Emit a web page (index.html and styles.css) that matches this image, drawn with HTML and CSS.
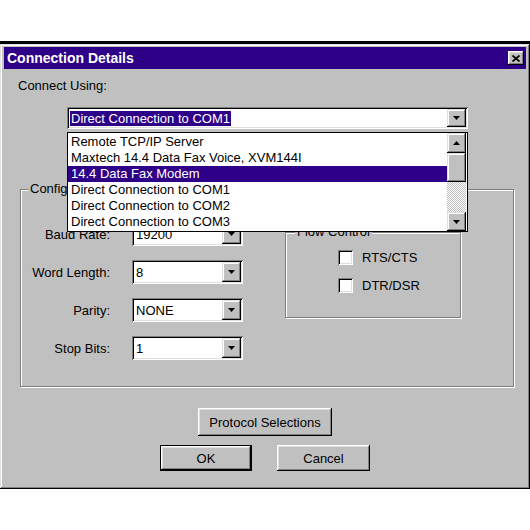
FILE: index.html
```html
<!DOCTYPE html>
<html>
<head>
<meta charset="utf-8">
<title>Connection Details</title>
<link rel="stylesheet" href="styles.css">
</head>
<body>
<div class="edge"></div>
<div class="dialog">
  <div class="titlebar">
    <span class="title">Connection Details</span>
    <span class="close-btn">
      <svg width="8" height="7" viewBox="0 0 8 7"><path d="M0.5 0.5 L7.5 6.5 M7.5 0.5 L0.5 6.5" stroke="#000" stroke-width="1.7" fill="none"/></svg>
    </span>
  </div>
  <div class="content">
    <div class="connect-label">Connect Using:</div>
    <div class="combo main-combo">
      <div class="combo-field"><span class="sel">Direct Connection to COM1</span></div>
      <div class="drop-btn"><svg width="7" height="4" viewBox="0 0 7 4"><path d="M0 0 H7 L3.5 4 Z" fill="#000"/></svg></div>
      <div class="droplist">
        <div class="items">
          <div class="item">Remote TCP/IP Server</div>
          <div class="item">Maxtech 14.4 Data Fax Voice, XVM144I</div>
          <div class="item active">14.4 Data Fax Modem</div>
          <div class="item">Direct Connection to COM1</div>
          <div class="item">Direct Connection to COM2</div>
          <div class="item">Direct Connection to COM3</div>
        </div>
        <div class="scrollbar">
          <div class="sb-btn sb-up"><svg width="7" height="4" viewBox="0 0 7 4"><path d="M0 4 H7 L3.5 0 Z" fill="#000"/></svg></div>
          <div class="sb-thumb"></div>
          <div class="sb-track"></div>
          <div class="sb-btn sb-down"><svg width="7" height="4" viewBox="0 0 7 4"><path d="M0 0 H7 L3.5 4 Z" fill="#000"/></svg></div>
        </div>
      </div>
    </div>

    <fieldset class="group config">
      <legend>Configuration</legend>
      <div class="config-inner">
        <div class="fields">
          <div class="row"><span class="lbl">Baud Rate:</span><div class="combo small-combo"><div class="combo-field">19200</div><div class="drop-btn"><svg width="7" height="4" viewBox="0 0 7 4"><path d="M0 0 H7 L3.5 4 Z" fill="#000"/></svg></div></div></div>
          <div class="row"><span class="lbl">Word Length:</span><div class="combo small-combo"><div class="combo-field">8</div><div class="drop-btn"><svg width="7" height="4" viewBox="0 0 7 4"><path d="M0 0 H7 L3.5 4 Z" fill="#000"/></svg></div></div></div>
          <div class="row"><span class="lbl">Parity:</span><div class="combo small-combo"><div class="combo-field">NONE</div><div class="drop-btn"><svg width="7" height="4" viewBox="0 0 7 4"><path d="M0 0 H7 L3.5 4 Z" fill="#000"/></svg></div></div></div>
          <div class="row"><span class="lbl">Stop Bits:</span><div class="combo small-combo"><div class="combo-field">1</div><div class="drop-btn"><svg width="7" height="4" viewBox="0 0 7 4"><path d="M0 0 H7 L3.5 4 Z" fill="#000"/></svg></div></div></div>
        </div>
        <fieldset class="group flow">
          <legend>Flow Control</legend>
          <div class="checks">
            <div class="check"><span class="box"></span><span>RTS/CTS</span></div>
            <div class="check"><span class="box"></span><span>DTR/DSR</span></div>
          </div>
        </fieldset>
      </div>
    </fieldset>

    <div class="buttons">
      <button class="btn proto">Protocol Selections</button>
      <div class="btn-row">
        <button class="btn ok">OK</button>
        <button class="btn cancel">Cancel</button>
      </div>
    </div>
  </div>
</div>
</body>
</html>
```

FILE: styles.css
```css
* { box-sizing: border-box; }
html, body { margin: 0; padding: 0; background: #fff; }
body {
  font-family: "Liberation Sans", Arial, sans-serif;
  font-size: 13px;
  color: #000;
  width: 530px;
  height: 530px;
  overflow: hidden;
}
.edge { height: 3px; background: #000; margin-top: 41px; }
.dialog {
  width: 530px;
  background: #c0c0c0;
  padding: 3px 4px 4px 4px;
  box-shadow: inset -1px -1px #000, inset 1px 1px #dfdfdf, inset -2px -2px #808080, inset 2px 2px #fff;
}
.titlebar {
  height: 22px;
  background: #2d0087;
  display: flex;
  align-items: center;
  justify-content: space-between;
  padding: 0 2px 0 3px;
}
.title { color: #fff; font-weight: bold; font-size: 14px; line-height: 22px; }
.close-btn {
  width: 16px;
  height: 14px;
  background: #c0c0c0;
  display: flex;
  align-items: center;
  justify-content: center;
  box-shadow: inset -1px -1px #000, inset 1px 1px #fff, inset -2px -2px #808080, inset 2px 2px #dfdfdf;
}
.content { padding: 9px 0 14px 0; }
.connect-label { margin-left: 14px; line-height: 16px; }

.combo {
  display: flex;
  background: #fff;
  padding: 2px;
  box-shadow: inset 1px 1px #808080, inset -1px -1px #fff, inset 2px 2px #000, inset -2px -2px #dfdfdf;
}
.combo-field { flex: 1; padding-left: 2px; display: flex; align-items: center; white-space: nowrap; overflow: hidden; }
.drop-btn {
  width: 19px;
  background: #c0c0c0;
  display: flex;
  align-items: center;
  justify-content: center;
  box-shadow: inset -1px -1px #000, inset 1px 1px #dfdfdf, inset -2px -2px #808080, inset 2px 2px #fff;
}
.main-combo {
  position: relative;
  margin: 13px 0 0 63px;
  width: 401px;
  height: 22px;
}
.main-combo .combo-field { padding-left: 1px; }
.sel { background: #2d0087; color: #fff; padding: 0 1px; line-height: 15px; }

.droplist {
  position: absolute;
  top: 25px;
  left: 0;
  width: 401px;
  height: 100px;
  border: 1px solid #000;
  background: #fff;
  display: flex;
  z-index: 5;
}
.items { flex: 1; padding-top: 1px; }
.item { height: 16px; line-height: 16px; padding-left: 3px; white-space: nowrap; }
.item.active { background: #2d0087; color: #fff; }
.scrollbar { width: 19px; display: flex; flex-direction: column; margin-right: 1px; }
.sb-btn, .sb-thumb {
  background: #c0c0c0;
  box-shadow: inset -1px -1px #000, inset 1px 1px #dfdfdf, inset -2px -2px #808080, inset 2px 2px #fff;
  display: flex;
  align-items: center;
  justify-content: center;
}
.sb-up { height: 20px; }
.sb-thumb { height: 29px; }
.sb-track {
  flex: 1;
  background-color: #fff;
  background-image: repeating-conic-gradient(#c0c0c0 0 25%, #fff 0 50%);
  background-size: 2px 2px;
}
.sb-down { height: 19px; }

.group {
  margin: 0;
  padding: 0;
  border: 1px solid #808080;
  box-shadow: inset 1px 1px #fff, 1px 1px #fff;
  min-width: 0;
}
.group legend {
  padding: 0 2px;
  line-height: 16px;
  background: #c0c0c0;
}
.config {
  margin: 52px 0 0 16px;
  width: 494px;
  padding-bottom: 26px;
}
.config legend { margin-left: 7px; }
.config-inner { display: flex; align-items: flex-start; margin-top: 25px; }
.fields { display: flex; flex-direction: column; gap: 14px; }
.row { display: flex; align-items: center; }
.lbl { width: 89px; text-align: right; margin-right: 22px; }
.small-combo { width: 111px; height: 24px; }

.flow {
  margin-left: 42px;
  margin-top: 2px;
  width: 176px;
  padding-bottom: 24px;
}
.flow legend { margin-left: 9px; }
.checks { display: flex; flex-direction: column; gap: 12px; padding: 9px 0 0 52px; }
.check { display: flex; align-items: center; height: 16px; gap: 9px; }
.box {
  width: 15px;
  height: 15px;
  background: #fff;
  box-shadow: inset 1px 1px #808080, inset -1px -1px #fff, inset 2px 2px #000, inset -2px -2px #dfdfdf;
}

.buttons {
  display: flex;
  flex-direction: column;
  align-items: center;
  gap: 9px;
  margin-top: 21px;
}
.btn-row { display: flex; gap: 25px; }
.btn {
  font: inherit;
  color: #000;
  background: #c0c0c0;
  border: none;
  padding: 0;
  margin: 0;
  box-shadow: inset -1px -1px #000, inset 1px 1px #fff, inset -2px -2px #808080, inset 2px 2px #dfdfdf;
}
.proto { width: 134px; height: 28px; }
.ok { width: 92px; height: 26px; border: 1px solid #000; }
.cancel { width: 93px; height: 26px; }
```
